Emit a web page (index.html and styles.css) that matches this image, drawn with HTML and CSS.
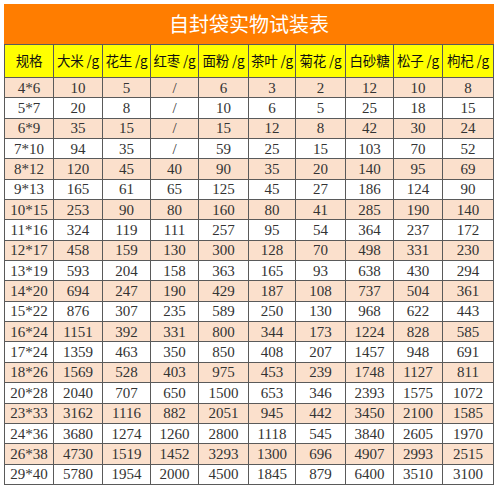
FILE: index.html
```html
<!DOCTYPE html>
<html lang="zh">
<head>
<meta charset="utf-8">
<title>自封袋实物试装表</title>
<link rel="stylesheet" href="styles.css">
</head>
<body>
<table class="sheet">
<colgroup>
<col class="c49"><col class="c49"><col class="c48"><col class="c48"><col class="c50"><col class="c47"><col class="c50"><col class="c48"><col class="c49"><col class="c51">
</colgroup>
<thead>
<tr class="title"><th colspan="10">自封袋实物试装表</th></tr>
<tr class="head"><th>规格</th><th>大米 /g</th><th>花生 /g</th><th>红枣 /g</th><th>面粉 /g</th><th>茶叶 /g</th><th>菊花 /g</th><th>白砂糖</th><th>松子 /g</th><th>枸杞 /g</th></tr>
</thead>
<tbody>
<tr class="odd"><td>4*6</td><td>10</td><td>5</td><td>/</td><td>6</td><td>3</td><td>2</td><td>12</td><td>10</td><td>8</td></tr>
<tr class="even"><td>5*7</td><td>20</td><td>8</td><td>/</td><td>10</td><td>6</td><td>5</td><td>25</td><td>18</td><td>15</td></tr>
<tr class="odd"><td>6*9</td><td>35</td><td>15</td><td>/</td><td>15</td><td>12</td><td>8</td><td>42</td><td>30</td><td>24</td></tr>
<tr class="even"><td>7*10</td><td>94</td><td>35</td><td>/</td><td>59</td><td>25</td><td>15</td><td>103</td><td>70</td><td>52</td></tr>
<tr class="odd"><td>8*12</td><td>120</td><td>45</td><td>40</td><td>90</td><td>35</td><td>20</td><td>140</td><td>95</td><td>69</td></tr>
<tr class="even"><td>9*13</td><td>165</td><td>61</td><td>65</td><td>125</td><td>45</td><td>27</td><td>186</td><td>124</td><td>90</td></tr>
<tr class="odd"><td>10*15</td><td>253</td><td>90</td><td>80</td><td>160</td><td>80</td><td>41</td><td>285</td><td>190</td><td>140</td></tr>
<tr class="even"><td>11*16</td><td>324</td><td>119</td><td>111</td><td>257</td><td>95</td><td>54</td><td>364</td><td>237</td><td>172</td></tr>
<tr class="odd"><td>12*17</td><td>458</td><td>159</td><td>130</td><td>300</td><td>128</td><td>70</td><td>498</td><td>331</td><td>230</td></tr>
<tr class="even"><td>13*19</td><td>593</td><td>204</td><td>158</td><td>363</td><td>165</td><td>93</td><td>638</td><td>430</td><td>294</td></tr>
<tr class="odd"><td>14*20</td><td>694</td><td>247</td><td>190</td><td>429</td><td>187</td><td>108</td><td>737</td><td>504</td><td>361</td></tr>
<tr class="even"><td>15*22</td><td>876</td><td>307</td><td>235</td><td>589</td><td>250</td><td>130</td><td>968</td><td>622</td><td>443</td></tr>
<tr class="odd"><td>16*24</td><td>1151</td><td>392</td><td>331</td><td>800</td><td>344</td><td>173</td><td>1224</td><td>828</td><td>585</td></tr>
<tr class="even"><td>17*24</td><td>1359</td><td>463</td><td>350</td><td>850</td><td>408</td><td>207</td><td>1457</td><td>948</td><td>691</td></tr>
<tr class="odd"><td>18*26</td><td>1569</td><td>528</td><td>403</td><td>975</td><td>453</td><td>239</td><td>1748</td><td>1127</td><td>811</td></tr>
<tr class="even"><td>20*28</td><td>2040</td><td>707</td><td>650</td><td>1500</td><td>653</td><td>346</td><td>2393</td><td>1575</td><td>1072</td></tr>
<tr class="odd"><td>23*33</td><td>3162</td><td>1116</td><td>882</td><td>2051</td><td>945</td><td>442</td><td>3450</td><td>2100</td><td>1585</td></tr>
<tr class="even"><td>24*36</td><td>3680</td><td>1274</td><td>1260</td><td>2800</td><td>1118</td><td>545</td><td>3840</td><td>2605</td><td>1970</td></tr>
<tr class="odd"><td>26*38</td><td>4730</td><td>1519</td><td>1452</td><td>3293</td><td>1300</td><td>696</td><td>4907</td><td>2993</td><td>2515</td></tr>
<tr class="even"><td>29*40</td><td>5780</td><td>1954</td><td>2000</td><td>4500</td><td>1845</td><td>879</td><td>6400</td><td>3510</td><td>3100</td></tr>
</tbody>
</table>
</body>
</html>
```
FILE: styles.css
```css
html, body {
  margin: 0;
  padding: 0;
  background: #ffffff;
}
body {
  padding: 4px 0 0 4px;
}
.sheet {
  border-collapse: collapse;
  table-layout: fixed;
  width: 490px;
  font-family: "Liberation Serif", "Noto Sans CJK SC", serif;
}
.c47 { width: 47px; }
.c48 { width: 48px; }
.c49 { width: 49px; }
.c50 { width: 50px; }
.c51 { width: 51px; }

.sheet th, .sheet td {
  border: 1px solid #5a5a5a;
  padding: 0;
  text-align: center;
  white-space: nowrap;
  overflow: hidden;
}
.title th {
  height: 37px;
  background: #ff7d00;
  color: #ffffff;
  font-family: "Noto Sans CJK SC", sans-serif;
  font-weight: 400;
  font-size: 20px;
  line-height: 24px;
  padding-bottom: 2px;
  border-color: #ff7d00 #ff7d00 #5a5a5a #ff7d00;
}
.head th {
  height: 29px;
  background: #ffff00;
  color: #111111;
  font-family: "Noto Sans CJK SC", sans-serif;
  font-weight: 400;
  font-size: 13.5px;
  letter-spacing: -0.2px;
  line-height: 18px;
  padding-bottom: 3px;
}
.sheet td {
  height: 19.35px;
  font-size: 15px;
  line-height: 16px;
  color: #333333;
}
.odd td { background: #fbe0cc; }
.even td { background: #ffffff; }
```
